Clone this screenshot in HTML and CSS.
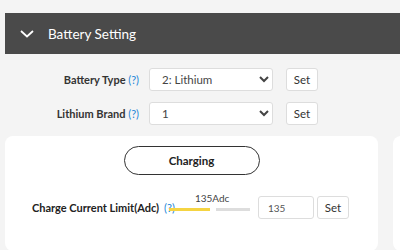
FILE: index.html
```html
<!DOCTYPE html>
<html lang="en">
<head>
    <meta charset="UTF-8">
    <meta name="viewport" content="width=device-width, initial-scale=1.0">
    <title>Battery Setting</title>
    <link rel="stylesheet" href="styles.css">
</head>
<body>
    <div class="section-header">
        <svg class="chevron" width="14" height="8" viewBox="0 0 14 8">
            <path d="M1 1 L7 6.5 L13 1" fill="none" stroke="#fff" stroke-width="1.8"/>
        </svg>
        <span class="section-title">Battery Setting</span>
    </div>

    <div class="form">
        <div class="form-row">
            <label class="form-label">Battery Type <span class="help">(?)</span></label>
            <select class="form-select">
                <option>2: Lithium</option>
            </select>
            <button class="btn-set">Set</button>
        </div>
        <div class="form-row">
            <label class="form-label">Lithium Brand <span class="help">(?)</span></label>
            <select class="form-select">
                <option>1</option>
            </select>
            <button class="btn-set">Set</button>
        </div>
    </div>

    <div class="cards">
        <div class="card">
            <div class="card-head">
                <div class="mode-pill">Charging</div>
            </div>
            <div class="slider-row">
                <span class="slider-label">Charge Current Limit(Adc)</span>
                <span class="help">(?)</span>
                <div class="slider">
                    <span class="slider-value">135Adc</span>
                    <div class="slider-track">
                        <div class="track-fill"></div>
                        <div class="track-rest"></div>
                    </div>
                </div>
                <input class="num-input" type="text" value="135">
                <button class="btn-set">Set</button>
            </div>
        </div>
        <div class="card"></div>
    </div>
</body>
</html>
```

FILE: styles.css
```css
body {
    margin: 0;
    padding-top: 13px;
    background: #f4f4f4;
    font-family: Lato, "Noto Sans", Arial, sans-serif;
    color: #222;
    overflow: hidden;
    height: 250px;
    box-sizing: border-box;
}

.section-header {
    margin-left: 5px;
    height: 41px;
    background: #4a4a4a;
    display: flex;
    align-items: center;
    padding-left: 15px;
}
.chevron {
    margin-right: 14px;
}
.section-title {
    color: #fff;
    font-size: 13.5px;
}

.form {
    padding-top: 14px;
    display: flex;
    flex-direction: column;
    gap: 11px;
}
.form-row {
    display: flex;
    align-items: center;
    height: 23px;
}
.form-label {
    width: 139px;
    text-align: right;
    font-size: 11px;
    font-weight: bold;
    color: #333;
}
.help {
    color: #1e88d8;
    font-weight: normal;
}
.form-select {
    margin-left: 10px;
    width: 124px;
    height: 23px;
    border: 1px solid #ddd;
    border-radius: 3px;
    background: #fff;
    font-family: inherit;
    font-size: 11.5px;
    color: #444;
    padding: 0 8px;
}
.btn-set {
    margin-left: 13px;
    width: 32px;
    height: 23px;
    border: 1px solid #ddd;
    border-radius: 3px;
    background: #fff;
    font-family: inherit;
    font-size: 11.5px;
    color: #333;
    padding: 0;
}

.cards {
    display: flex;
    gap: 15px;
    padding-left: 5px;
    margin-top: 11px;
    overflow: hidden;
}
.card {
    flex: 0 0 373px;
    height: 115px;
    background: #fff;
    border-radius: 8px;
}
.card-head {
    display: flex;
    justify-content: center;
    padding-top: 10px;
}
.mode-pill {
    width: 134px;
    height: 27px;
    border: 1.5px solid #333;
    border-radius: 15px;
    display: flex;
    align-items: center;
    justify-content: center;
    font-size: 11.5px;
    font-weight: bold;
    color: #222;
}

.slider-row {
    display: flex;
    align-items: center;
    padding-left: 27px;
    margin-top: 21px;
    height: 23px;
}
.slider-label {
    font-size: 11px;
    font-weight: bold;
    color: #222;
    margin-right: 5px;
}
.slider-row .help {
    font-size: 11px;
}
.slider {
    position: relative;
    width: 84px;
    margin-left: -6px;
    margin-top: 3px;
}
.slider-value {
    position: absolute;
    left: 26px;
    top: -16px;
    font-size: 10px;
    color: #444;
}
.slider-track {
    display: flex;
    gap: 6px;
}
.track-fill {
    width: 41px;
    height: 3px;
    background: #f5d442;
}
.track-rest {
    width: 34px;
    height: 3px;
    background: #ddd;
}
.num-input {
    margin-left: 5px;
    width: 56px;
    height: 23px;
    box-sizing: border-box;
    border: 1px solid #ddd;
    border-radius: 3px;
    font-family: inherit;
    font-size: 10px;
    color: #555;
    padding: 0 9px;
}
.slider-row .btn-set {
    margin-left: 3px;
}
```
